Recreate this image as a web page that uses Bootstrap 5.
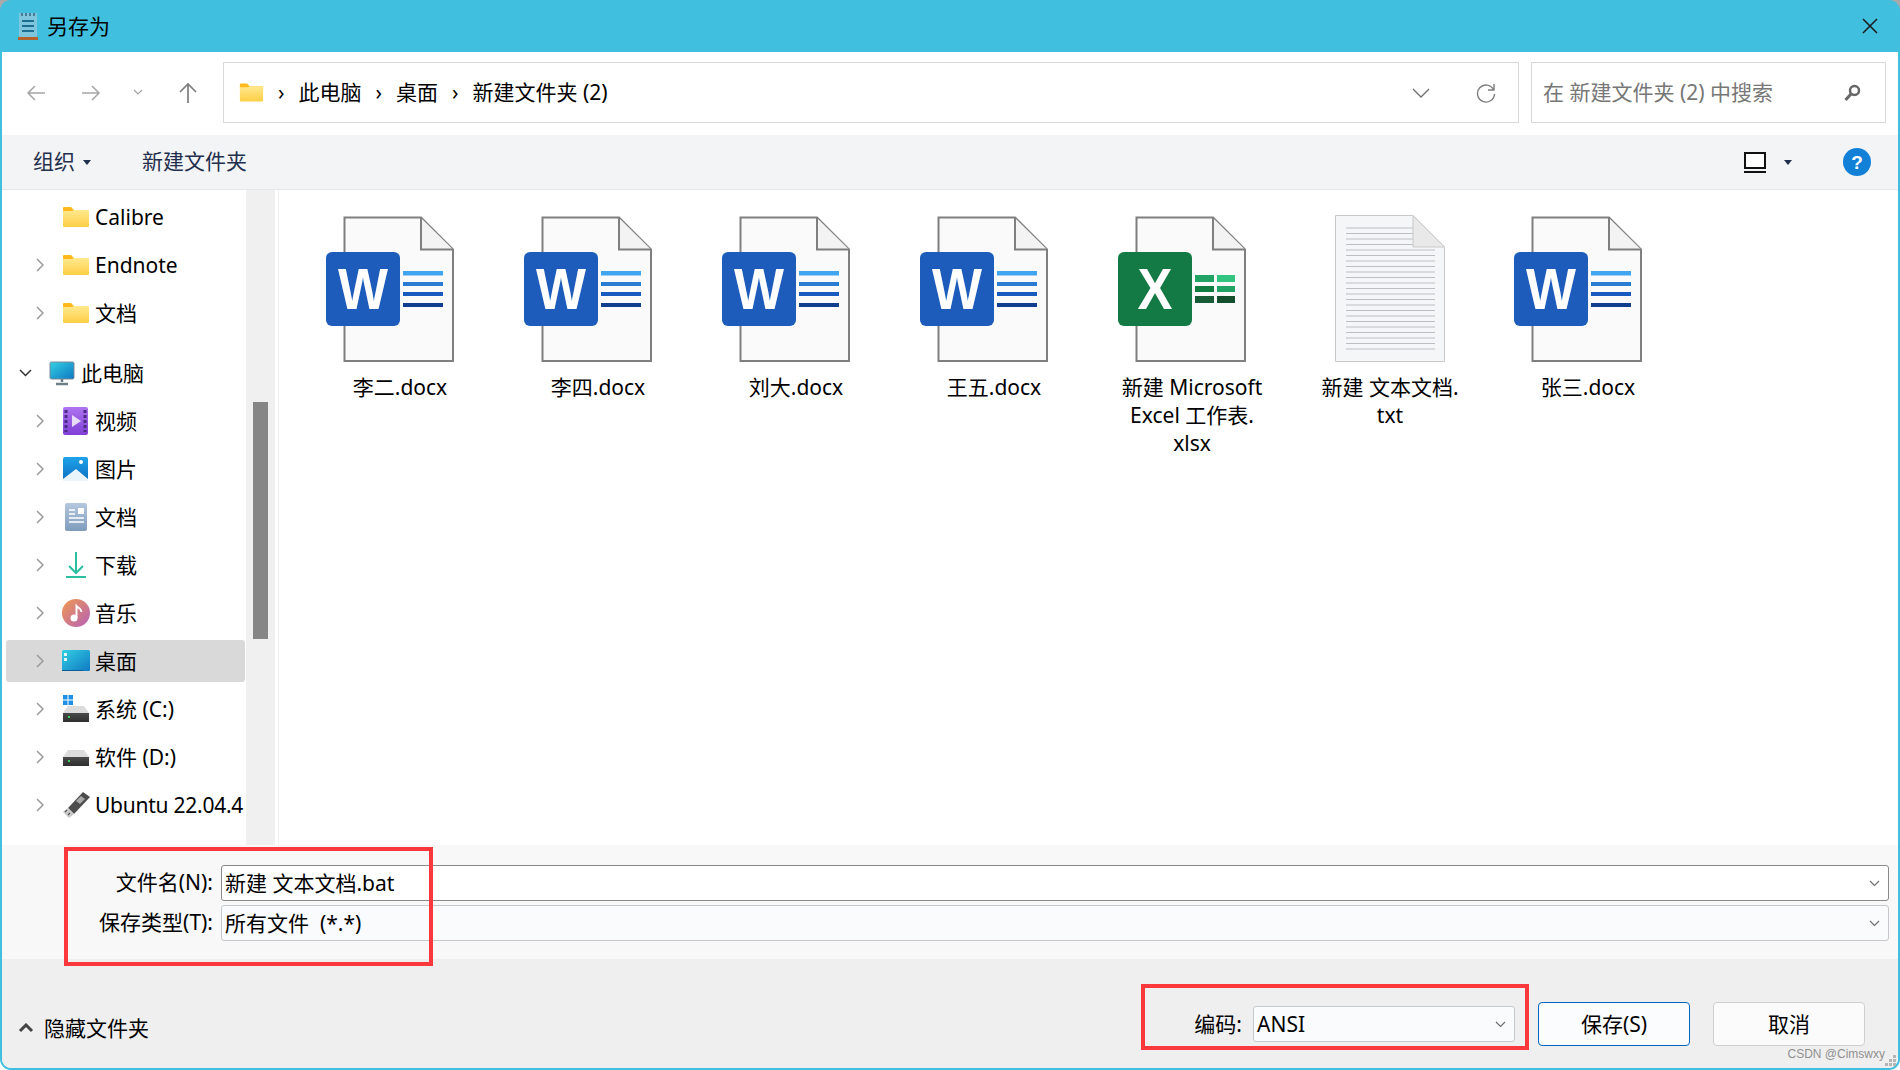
<!DOCTYPE html>
<html lang="zh-CN">
<head>
    <meta charset="UTF-8">
    <title>另存为</title>
    <link rel="stylesheet" href="https://cdn.jsdelivr.net/npm/bootstrap@5.3.0/dist/css/bootstrap.min.css">
    <style>
        html, body { height: 100%; }
        body {
            margin: 0;
            overflow: hidden;
            background: linear-gradient(#a9a9a9 0 12px, #fff 12px);
            font-family: "Noto Sans", "Noto Sans CJK SC", sans-serif;
            font-size: 21px;
            color: #000;
        }
        .dlg-win {
            position: relative;
            width: 1900px;
            height: 1070px;
            padding: 0 2px 2px;
            background: #40c0de;
            border-radius: 11px;
            overflow: hidden;
        }
        .dlg-inner {
            height: 1016px;
            border-radius: 0 0 9px 9px;
            overflow: hidden;
            background: #fff;
        }
        .dlg-title { height: 52px; padding: 0 20px 0 15px; font-size: 21px; line-height: 52px; }
        .dlg-title span { margin-left: 8px; }

        .nav-strip { height: 83px; padding: 10px 12px 12px 0; }
        .nav-btns { width: 221px; }
        .nav-btns .b1 { margin-left: 24px; }
        .nav-btns .b2 { margin-left: 35px; }
        .nav-btns .b3 { margin-left: 32px; }
        .nav-btns .b4 { margin-left: 35px; }
        .addr-box, .find-box {
            height: 61px;
            border: 1px solid #d9d9d9;
            background: #fff;
        }
        .addr-box { width: 1296px; padding: 0 22px 0 15px; }
        .addr-box .crumb { line-height: 61px; white-space: nowrap; }
        .addr-box .sep { margin: 0 14px; }
        .addr-gap { margin-left: 46px; }
        .find-box { width: 355px; margin-left: 12px; padding: 0 24px 0 11px; color: #777; }
        .tool-strip {
            height: 55px;
            padding: 0 27px 0 31px;
            background: #f3f4f6;
            border-bottom: 1px solid #e6e7e9;
            color: #1f2f4d;
        }
        .tool-new { margin-left: 51px; }
        .tool-caret { margin-left: 18px; }
        .tool-help { margin-left: 51px; }

        .main-split { height: 655px; }
        .side-pane { width: 244px; overflow: hidden; padding-top: 6px; }
        .side-row {
            height: 42px;
            width: 239px;
            margin: 0 0 6px 4px;
            padding-left: 30px;
            border-radius: 3px;
            overflow: hidden;
            white-space: nowrap;
            line-height: 42px;
        }
        .side-row.is-sel { background: #d9d9d9; }
        .side-row.is-top { margin-top: 18px; padding-left: 13px; }
        .side-row.is-tight { letter-spacing: -.25px; }
        .side-row .slot { width: 28px; height: 28px; margin: 0 5px 0 18px; flex: none; }
        .side-row.is-top .slot { margin: 0 5px 0 16px; }
        .side-row .exp { width: 8px; flex: none; }
        .side-scroll { width: 29px; background: #f0f0f0; padding: 212px 7px 0; }
        .side-thumb { height: 237px; background: #868686; }
        .pane-gap { width: 3px; }

        .file-grid { padding: 20px 0 0 22px; border-left: 1px solid #f2f2f2; }
        .file-cell { width: 198px; text-align: center; }
        .file-cell svg { display: block; margin: 0 auto; }
        .file-name { width: 150px; margin: 3px auto 0; line-height: 28px; word-break: break-word; }

        .name-panel { height: 114px; padding: 20px 9px 0 0; background: #f8f8f8; }
        .name-line { height: 36px; margin-bottom: 4px; }
        .name-line label { width: 211px; text-align: right; margin: 0 8px 0 0; line-height: 35px; }
        .win-field {
            height: 36px;
            padding: 0 8px 0 3px;
            font-size: 21px;
            line-height: 33px;
            border-radius: 3px;
            border: 1px solid #c5c8cc;
            background: #fafbfd;
            color: #000;
        }
        .win-field.is-active { border-color: #8a8a8a; background: #fff; }
        .foot-bar { height: 109px; padding: 0 33px 22px 16px; background: #efefef; }
        .hide-toggle { line-height: 36px; }
        .hide-toggle span { margin-left: 10px; }
        .enc-label { margin: 0 11px 4px 0; line-height: 36px; }
        .enc-select { width: 262px; margin-bottom: 4px; padding-left: 3px; }
        .win-btn {
            width: 152px;
            height: 44px;
            padding: 0;
            margin-left: 23px;
            font-size: 21px;
            line-height: 42px;
            border-radius: 4px;
            border: 1px solid #d0d0d0;
            background: #fbfbfb;
            color: #000;
        }
        .win-btn.is-main { border: 1.5px solid #0067c0; background: #fbfcfe; }

        .red-mark { position: absolute; border: 4px solid #fb383b; pointer-events: none; }
        .mark-a { left: 64px; top: 847px; width: 369px; height: 119px; }
        .mark-b { left: 1141px; top: 984px; width: 388px; height: 66px; }
        .wm-text {
            position: absolute;
            right: 15px;
            bottom: 8px;
            font-size: 12px;
            line-height: 16px;
            color: #8f8f8f;
            font-family: "Liberation Sans", sans-serif;
        }
        .grip-dots { position: absolute; right: 3px; bottom: 3px; }
    </style>
</head>
<body>
    <!-- shared icons -->
    <svg width="0" height="0" class="d-block" aria-hidden="true">
        <defs>
            <linearGradient id="gFolder" x1="0" y1="0" x2="0" y2="1"><stop offset="0" stop-color="#ffe88f"/><stop offset="1" stop-color="#ffcf45"/></linearGradient>
            <linearGradient id="gScreen" x1="0" y1="0" x2="1" y2="1"><stop offset="0" stop-color="#33d0e4"/><stop offset="1" stop-color="#0f78c2"/></linearGradient>
            <linearGradient id="gVideo" x1="0" y1="0" x2="0" y2="1"><stop offset="0" stop-color="#ae74f0"/><stop offset="1" stop-color="#7f3fd6"/></linearGradient>
            <linearGradient id="gPic" x1="0" y1="0" x2="0" y2="1"><stop offset="0" stop-color="#1fa3ea"/><stop offset="1" stop-color="#0c6fc0"/></linearGradient>
            <linearGradient id="gDoc" x1="0" y1="0" x2="0" y2="1"><stop offset="0" stop-color="#b5c8de"/><stop offset="1" stop-color="#7f9cbc"/></linearGradient>
            <linearGradient id="gMusic" x1="0" y1="0" x2="1" y2="1"><stop offset="0" stop-color="#f09a50"/><stop offset="1" stop-color="#b560b8"/></linearGradient>
            <linearGradient id="gDrive" x1="0" y1="0" x2="0" y2="1"><stop offset="0" stop-color="#4a4a4a"/><stop offset="1" stop-color="#2e2e2e"/></linearGradient>
            <symbol id="icoFolder" viewBox="0 0 28 28">
                <path d="M1 5a1 1 0 0 1 1-1h7l3 3h15v4H1z" fill="#ffb91c"/>
                <path d="M1 8h9l2-1h15v16a1 1 0 0 1-1 1H2a1 1 0 0 1-1-1z" fill="url(#gFolder)"/>
            </symbol>
            <symbol id="icoChev" viewBox="0 0 8 14">
                <path d="M1 1l6 6-6 6" fill="none" stroke="#9a9a9a" stroke-width="1.5"/>
            </symbol>
            <symbol id="fileWord" viewBox="0 0 160 160">
                <path d="M24.5 7.5H101L133 39.5V151H24.5z" fill="#fafafa" stroke="#7f7f7f" stroke-width="2"/>
                <path d="M101 8V39.5H133" fill="#f3f3f3" stroke="#7f7f7f" stroke-width="2"/>
                <rect x="6" y="42" width="74" height="74" rx="6" fill="#1d5cbb"/>
                <text x="43" y="99" text-anchor="middle" font-family="Liberation Sans" font-weight="700" font-size="57" textLength="50" lengthAdjust="spacingAndGlyphs" fill="#fff">W</text>
                <rect x="83" y="61" width="40" height="4.5" fill="#42a5f0"/>
                <rect x="83" y="72" width="40" height="4" fill="#2b7cd3"/>
                <rect x="83" y="82" width="40" height="4" fill="#185abd"/>
                <rect x="83" y="93" width="40" height="4" fill="#103f91"/>
            </symbol>
            <symbol id="fileExcel" viewBox="0 0 160 160">
                <path d="M24.5 7.5H101L133 39.5V151H24.5z" fill="#fafafa" stroke="#7f7f7f" stroke-width="2"/>
                <path d="M101 8V39.5H133" fill="#f3f3f3" stroke="#7f7f7f" stroke-width="2"/>
                <rect x="6" y="42" width="74" height="74" rx="6" fill="#147a45"/>
                <text x="43" y="99" text-anchor="middle" font-family="Liberation Sans" font-weight="700" font-size="57" textLength="35" lengthAdjust="spacingAndGlyphs" fill="#fff">X</text>
                <rect x="83" y="65" width="19" height="7" fill="#21a366"/><rect x="105" y="65" width="18" height="7" fill="#33c481"/>
                <rect x="83" y="76" width="19" height="6" fill="#107c41"/><rect x="105" y="76" width="18" height="6" fill="#21a366"/>
                <rect x="83" y="86" width="19" height="7" fill="#185c37"/><rect x="105" y="86" width="18" height="7" fill="#134f2c"/>
            </symbol>
            <symbol id="fileTxt" viewBox="0 0 160 160">
                <path d="M25.5 5.5H103L134.5 37V151.5H25.5z" fill="#f5f6f8" stroke="#c9c9c9"/>
                <path d="M36 18h67M36 23.500h67M36 29h67M36 34.500h67M36 40h89M36 45.500h89M36 51h89M36 56.500h89M36 62h89M36 67.500h89M36 73h89M36 78.500h89M36 84h89M36 89.500h89M36 95h89M36 100.500h89M36 106h89M36 111.500h89M36 117h89M36 122.500h89M36 128h89M36 133.500h89M36 139h89" stroke="#bcbec3" stroke-width="1" fill="none"/>
                <path d="M103 5.500L134.500 37H103z" fill="#e9e9e9" stroke="#c9c9c9"/>
            </symbol>
        </defs>
    </svg>

    <div class="dlg-win">
        <!-- title bar -->
        <div class="dlg-title d-flex align-items-center">
            <svg width="22" height="29" viewBox="0 0 22 29">
                <rect x="2" y="1" width="18" height="25" fill="#7fc5dd"/>
                <path d="M5 1v3M9 1v3M13 1v3M17 1v3" stroke="#35627f" stroke-width="1.500"/>
                <path d="M5 9h12M5 14h12M5 19h12" stroke="#1d6f92" stroke-width="2"/>
                <rect x="1" y="25" width="20" height="3" fill="#b5622c"/>
            </svg>
            <span>另存为</span>
            <svg class="ms-auto" width="16" height="16" viewBox="0 0 16 16"><path d="M1 1l14 14M15 1L1 15" stroke="#1a1a1a" stroke-width="1.500"/></svg>
        </div>

        <div class="dlg-inner d-flex flex-column">
            <!-- address row -->
            <div class="nav-strip d-flex">
                <div class="nav-btns d-flex align-items-center">
                    <svg class="b1" width="20" height="18" viewBox="0 0 20 18"><path d="M19 9H2M9 2L2 9l7 7" fill="none" stroke="#a6a6a6" stroke-width="1.500"/></svg>
                    <svg class="b2" width="20" height="18" viewBox="0 0 20 18"><path d="M1 9h17M11 2l7 7-7 7" fill="none" stroke="#a6a6a6" stroke-width="1.500"/></svg>
                    <svg class="b3" width="10" height="7" viewBox="0 0 10 7"><path d="M1 1l4 4 4-4" fill="none" stroke="#a6a6a6" stroke-width="1.200"/></svg>
                    <svg class="b4" width="20" height="22" viewBox="0 0 20 22"><path d="M10 21V2M2 10l8-8 8 8" fill="none" stroke="#7d7d7d" stroke-width="1.700"/></svg>
                </div>
                <div class="addr-box d-flex align-items-center">
                    <svg width="25" height="25" viewBox="0 0 28 28"><use href="#icoFolder"/></svg>
                    <span class="crumb sep">›</span><span class="crumb">此电脑</span>
                    <span class="crumb sep">›</span><span class="crumb">桌面</span>
                    <span class="crumb sep">›</span><span class="crumb">新建文件夹 (2)</span>
                    <svg class="ms-auto" width="18" height="10" viewBox="0 0 18 10"><path d="M1 1l8 8 8-8" fill="none" stroke="#6f6f6f" stroke-width="1.300"/></svg>
                    <svg class="addr-gap" width="20" height="20" viewBox="0 0 20 20"><path d="M17.500 6.500A8.500 8.500 0 1 0 18.500 11M18 1v6h-6" fill="none" stroke="#7d7d7d" stroke-width="1.400"/></svg>
                </div>
                <div class="find-box d-flex align-items-center justify-content-between">
                    <span>在 新建文件夹 (2) 中搜索</span>
                    <svg width="17" height="18" viewBox="0 0 17 18"><circle cx="10.500" cy="6.500" r="4.500" fill="none" stroke="#666" stroke-width="2.500"/><path d="M7 10l-5.500 6" stroke="#666" stroke-width="3"/></svg>
                </div>
            </div>

            <!-- command bar -->
            <div class="tool-strip d-flex align-items-center">
                <span>组织</span>
                <svg class="ms-2" width="8" height="5" viewBox="0 0 8 5"><path d="M0 0h8L4 5z" fill="#1f2f4d"/></svg>
                <span class="tool-new">新建文件夹</span>
                <svg class="ms-auto" width="22" height="21" viewBox="0 0 22 21"><rect x="1" y="1" width="20" height="15" fill="#fff" stroke="#111" stroke-width="2"/><path d="M0 20h22" stroke="#111" stroke-width="2"/></svg>
                <svg class="tool-caret" width="8" height="5" viewBox="0 0 8 5"><path d="M0 0h8L4 5z" fill="#1f2f4d"/></svg>
                <svg class="tool-help" width="28" height="28" viewBox="0 0 28 28">
                    <circle cx="14" cy="14" r="14" fill="#1380d8"/>
                    <text x="14" y="21" text-anchor="middle" font-family="Liberation Sans" font-weight="700" font-size="19" fill="#fff">?</text>
                </svg>
            </div>

            <div class="main-split d-flex">
                <!-- tree -->
                <div class="side-pane">
                    <div class="side-row d-flex align-items-center"><span class="exp"></span><svg class="slot"><use href="#icoFolder"/></svg>Calibre</div>
                    <div class="side-row d-flex align-items-center"><svg class="exp" height="14"><use href="#icoChev"/></svg><svg class="slot"><use href="#icoFolder"/></svg>Endnote</div>
                    <div class="side-row d-flex align-items-center"><svg class="exp" height="14"><use href="#icoChev"/></svg><svg class="slot"><use href="#icoFolder"/></svg>文档</div>
                    <div class="side-row is-top d-flex align-items-center">
                        <svg width="13" height="8" viewBox="0 0 13 8"><path d="M1 1l5.500 5.500L12 1" fill="none" stroke="#333" stroke-width="1.500"/></svg>
                        <svg class="slot" viewBox="0 0 28 28"><rect x="2" y="3" width="24" height="17" rx="1.500" fill="url(#gScreen)" stroke="#7a8a94"/><path d="M14 20v3M8 25h12" stroke="#6f7f8a" stroke-width="2.500"/></svg>此电脑
                    </div>
                    <div class="side-row d-flex align-items-center"><svg class="exp" height="14"><use href="#icoChev"/></svg>
                        <svg class="slot" viewBox="0 0 28 28"><rect x="1" y="0" width="25" height="28" rx="2" fill="url(#gVideo)"/><path d="M4 3v22M23 3v22" stroke="#4c2a85" stroke-width="3" stroke-dasharray="3 2"/><path d="M10 8l9 6-9 6z" fill="#e9dcfa"/></svg>视频
                    </div>
                    <div class="side-row d-flex align-items-center"><svg class="exp" height="14"><use href="#icoChev"/></svg>
                        <svg class="slot" viewBox="0 0 28 28"><rect x="1" y="2" width="25" height="24" rx="2" fill="url(#gPic)"/><path d="M1 24l13-10 12 10v2H1z" fill="#eaf4fb"/><circle cx="19" cy="7" r="2" fill="#fff"/></svg>图片
                    </div>
                    <div class="side-row d-flex align-items-center"><svg class="exp" height="14"><use href="#icoChev"/></svg>
                        <svg class="slot" viewBox="0 0 28 28"><rect x="3" y="0" width="22" height="28" rx="2" fill="url(#gDoc)"/><path d="M7 7h6M7 11h6M7 15h15M7 19h15" stroke="#fff" stroke-width="1.500"/><rect x="16" y="5" width="6" height="6" fill="#fff"/></svg>文档
                    </div>
                    <div class="side-row d-flex align-items-center"><svg class="exp" height="14"><use href="#icoChev"/></svg>
                        <svg class="slot" viewBox="0 0 28 28"><path d="M14 1v21M7 15l7 7 7-7" fill="none" stroke="#2bbfa0" stroke-width="2"/><path d="M4 26h20" stroke="#2bbfa0" stroke-width="2"/></svg>下载
                    </div>
                    <div class="side-row d-flex align-items-center"><svg class="exp" height="14"><use href="#icoChev"/></svg>
                        <svg class="slot" viewBox="0 0 28 28"><circle cx="14" cy="14" r="14" fill="url(#gMusic)"/><circle cx="12" cy="19" r="3.500" fill="#fff"/><path d="M14.500 19V7c2 2.500 5 2.500 5 6" fill="none" stroke="#fff" stroke-width="2"/></svg>音乐
                    </div>
                    <div class="side-row is-sel d-flex align-items-center"><svg class="exp" height="14"><use href="#icoChev"/></svg>
                        <svg class="slot" viewBox="0 0 28 28"><rect x="0" y="3" width="28" height="21" rx="1.500" fill="url(#gScreen)"/><rect x="2" y="6" width="3" height="3" fill="#e6f7fc"/><rect x="2" y="11" width="3" height="3" fill="#e6f7fc"/><path d="M0 23.500h21" stroke="#0d5c96" stroke-width="1"/></svg>桌面
                    </div>
                    <div class="side-row d-flex align-items-center"><svg class="exp" height="14"><use href="#icoChev"/></svg>
                        <svg class="slot" viewBox="0 0 28 28"><path d="M1 18l5-7h16l5 7z" fill="#dcdcdc"/><rect x="1" y="18" width="26" height="9" fill="url(#gDrive)"/><rect x="6" y="21" width="2" height="2" fill="#3ecf5a"/><rect x="1" y="0" width="4.500" height="4.500" fill="#1e90e6"/><rect x="6.500" y="0" width="4.500" height="4.500" fill="#1e90e6"/><rect x="1" y="5.500" width="4.500" height="4.500" fill="#1e90e6"/><rect x="6.500" y="5.500" width="4.500" height="4.500" fill="#1e90e6"/></svg>系统 (C:)
                    </div>
                    <div class="side-row d-flex align-items-center"><svg class="exp" height="14"><use href="#icoChev"/></svg>
                        <svg class="slot" viewBox="0 0 28 28"><path d="M1 14l5-7h16l5 7z" fill="#dcdcdc"/><rect x="1" y="14" width="26" height="9" fill="url(#gDrive)"/><rect x="6" y="17" width="2" height="2" fill="#3ecf5a"/></svg>软件 (D:)
                    </div>
                    <div class="side-row is-tight d-flex align-items-center"><svg class="exp" height="14"><use href="#icoChev"/></svg>
                        <svg class="slot" viewBox="0 0 28 28"><path d="M6 17L21 1l7 5-16 17z" fill="#4d4d4d"/><path d="M14 10l5-5 4 3-5 5z" fill="#a8a8a8"/><path d="M6 17l6 6-5 4-6-6z" fill="#c9c9c9"/><path d="M3 21l2-2M6 24l2-2" stroke="#555" stroke-width="1.200"/></svg>Ubuntu 22.04.4
                    </div>
                </div>
                <div class="side-scroll"><div class="side-thumb"></div></div>
                <div class="pane-gap"></div>

                <!-- files -->
                <div class="file-grid d-flex align-items-start flex-grow-1">
                    <div class="file-cell"><svg width="160" height="160"><use href="#fileWord"/></svg><div class="file-name">李二.docx</div></div>
                    <div class="file-cell"><svg width="160" height="160"><use href="#fileWord"/></svg><div class="file-name">李四.docx</div></div>
                    <div class="file-cell"><svg width="160" height="160"><use href="#fileWord"/></svg><div class="file-name">刘大.docx</div></div>
                    <div class="file-cell"><svg width="160" height="160"><use href="#fileWord"/></svg><div class="file-name">王五.docx</div></div>
                    <div class="file-cell"><svg width="160" height="160"><use href="#fileExcel"/></svg><div class="file-name">新建 Microsoft Excel 工作表.<br>xlsx</div></div>
                    <div class="file-cell"><svg width="160" height="160"><use href="#fileTxt"/></svg><div class="file-name">新建 文本文档.<br>txt</div></div>
                    <div class="file-cell"><svg width="160" height="160"><use href="#fileWord"/></svg><div class="file-name">张三.docx</div></div>
                </div>
            </div>

            <!-- file name / type -->
            <div class="name-panel">
                <div class="name-line d-flex">
                    <label>文件名(N):</label>
                    <div class="form-control win-field is-active flex-grow-1 d-flex align-items-center justify-content-between w-auto">
                        <span>新建 文本文档.bat</span>
                        <svg width="11" height="7" viewBox="0 0 11 7"><path d="M1 1l4.500 4.500L10 1" fill="none" stroke="#6f6f6f" stroke-width="1.200"/></svg>
                    </div>
                </div>
                <div class="name-line d-flex">
                    <label>保存类型(T):</label>
                    <div class="form-control win-field flex-grow-1 d-flex align-items-center justify-content-between w-auto">
                        <span>所有文件&nbsp; (*.*)</span>
                        <svg width="11" height="7" viewBox="0 0 11 7"><path d="M1 1l4.500 4.500L10 1" fill="none" stroke="#6f6f6f" stroke-width="1.200"/></svg>
                    </div>
                </div>
            </div>

            <!-- bottom bar -->
            <div class="foot-bar d-flex align-items-end">
                <div class="hide-toggle d-flex align-items-center me-auto">
                    <svg width="16" height="10" viewBox="0 0 16 10"><path d="M2 8l6-6 6 6" fill="none" stroke="#444" stroke-width="3"/></svg>
                    <span>隐藏文件夹</span>
                </div>
                <div class="enc-label">编码:</div>
                <div class="form-control win-field enc-select d-flex align-items-center justify-content-between">
                    <span>ANSI</span>
                    <svg width="11" height="7" viewBox="0 0 11 7"><path d="M1 1l4.500 4.500L10 1" fill="none" stroke="#6f6f6f" stroke-width="1.200"/></svg>
                </div>
                <button type="button" class="btn win-btn is-main">保存(S)</button>
                <button type="button" class="btn win-btn">取消</button>
            </div>
        </div>

        <!-- annotation boxes drawn on top of the dialog -->
        <div class="red-mark mark-a"></div>
        <div class="red-mark mark-b"></div>
        <div class="wm-text">CSDN @Cimswxy</div>
        <svg class="grip-dots" width="12" height="12" viewBox="0 0 12 12"><path d="M8 0h3v3H8zM4 4h3v3H4zM8 4h3v3H8zM0 8h3v3H0zM4 8h3v3H4zM8 8h3v3H8z" fill="#b5b5b5"/></svg>
    </div>

    <script src="https://cdn.jsdelivr.net/npm/bootstrap@5.3.0/dist/js/bootstrap.bundle.min.js"></script>
</body>
</html>
